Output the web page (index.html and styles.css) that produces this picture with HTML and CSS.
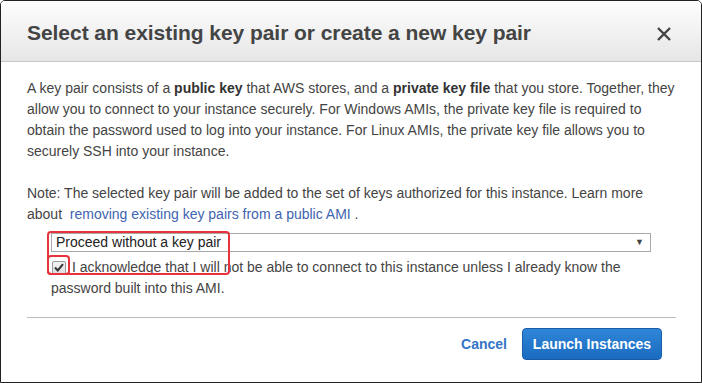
FILE: index.html
```html
<!DOCTYPE html>
<html>
<head>
  <title>Select key pair</title>
  <link rel="stylesheet" href="styles.css">
</head>
<body>
  <div class="dialog">
    <div class="dialog-header">
      <h2>Select an existing key pair or create a new key pair</h2>
      <span class="close">
        <svg width="14" height="14" viewBox="0 0 14 14"><path d="M1 1 L13 13 M13 1 L1 13" stroke="#444" stroke-width="2.4" fill="none"/></svg>
      </span>
    </div>

    <div class="dialog-body">
      <p>A key pair consists of a <b>public key</b> that AWS stores, and a <b>private key file</b> that you store. Together, they allow you to connect to your instance securely. For Windows AMIs, the private key file is required to obtain the password used to log into your instance. For Linux AMIs, the private key file allows you to securely SSH into your instance.</p>

      <p class="note">Note: The selected key pair will be added to the set of keys authorized for this instance. Learn more about &nbsp;<a href="#">removing existing key pairs from a public AMI</a> .</p>

      <div class="choice">
        <div class="select">
          <span>Proceed without a key pair</span>
          <span class="arrow">&#9660;</span>
        </div>
        <label class="ack">
          <span class="check">
            <svg width="10" height="9" viewBox="0 0 10 9"><path d="M1 4.5 L3.8 7.5 L9 1.2" stroke="#333" stroke-width="2" fill="none"/></svg>
          </span> I acknowledge that I will not be able to connect to this instance unless I already know the password built into this AMI.
        </label>
        <span class="mark mark-select"></span>
        <span class="mark mark-check"></span>
      </div>
    </div>

    <div class="dialog-footer">
      <a href="#" class="cancel">Cancel</a>
      <button class="launch">Launch Instances</button>
    </div>
  </div>
</body>
</html>
```

FILE: styles.css
```css
body {
  margin: 0;
  font-family: "Liberation Sans", Arial, sans-serif;
  background: #fff;
}
.dialog {
  width: 702px;
  height: 383px;
  box-sizing: border-box;
  border: 1px solid #222;
  border-radius: 5px 5px 0 0;
  background: white;
  overflow: hidden;
}
.dialog-header {
  height: 60px;
  display: flex;
  align-items: center;
  justify-content: space-between;
  padding: 0 30px 0 26px;
  background: linear-gradient(#fefefe, #e6e6e6);
  border-bottom: 1px solid #c8c8c8;
}
.dialog-header h2 {
  margin: 0;
  font-size: 21px;
  font-weight: bold;
  color: #444;
  padding-top: 3px;
  letter-spacing: -0.05px;
}
.close {
  display: flex;
  padding-top: 5px;
}
.dialog-body {
  padding: 16px 26px 0 26px;
  font-size: 14px;
  line-height: 21px;
  color: #444;
}
.dialog-body p {
  margin: 0 0 21px 0;
}
.dialog-body p.note {
  margin-bottom: 8px;
}
.dialog-body b {
  color: #333;
}
.dialog-body a {
  color: #4064b0;
  text-decoration: none;
}
.choice {
  position: relative;
  margin-left: 24px;
}
.select {
  height: 19px;
  box-sizing: border-box;
  border: 1px solid #a9a9a9;
  display: flex;
  align-items: center;
  justify-content: space-between;
  padding: 0 6px 0 4px;
  color: #222;
  font-size: 14px;
  width: 600px;
}
.arrow {
  font-size: 9px;
  color: #444;
}
.ack {
  display: block;
  margin-top: 5px;
}
.check {
  display: inline-flex;
  align-items: center;
  justify-content: center;
  width: 14px;
  height: 14px;
  box-sizing: border-box;
  border: 1px solid #999;
  border-radius: 2px;
  background: linear-gradient(#f4f4f4, #dcdcdc);
  vertical-align: 0;
  margin-left: 1px;
  margin-right: 2px;
}
.mark {
  position: absolute;
  border: 2px solid #e8333c;
  border-radius: 4px;
}
.mark-select {
  left: -4px;
  top: -2px;
  width: 179px;
  height: 40px;
}
.mark-check {
  left: -4px;
  top: 22px;
  width: 19px;
  height: 16px;
}
.dialog-footer {
  margin: 18px 25px 0 26px;
  border-top: 1px solid #bbb;
  padding: 10px 14px 0 0;
  display: flex;
  justify-content: flex-end;
  align-items: center;
  gap: 15px;
}
.cancel {
  color: #3574c8;
  font-weight: bold;
  font-size: 14px;
  text-decoration: none;
}
.launch {
  width: 140px;
  height: 32px;
  border: 1px solid #1c5ea6;
  border-radius: 4px;
  background: linear-gradient(#2f86d8, #1a6bc0);
  color: white;
  font-family: "Liberation Sans", Arial, sans-serif;
  font-size: 14px;
  font-weight: bold;
  cursor: pointer;
}
```
